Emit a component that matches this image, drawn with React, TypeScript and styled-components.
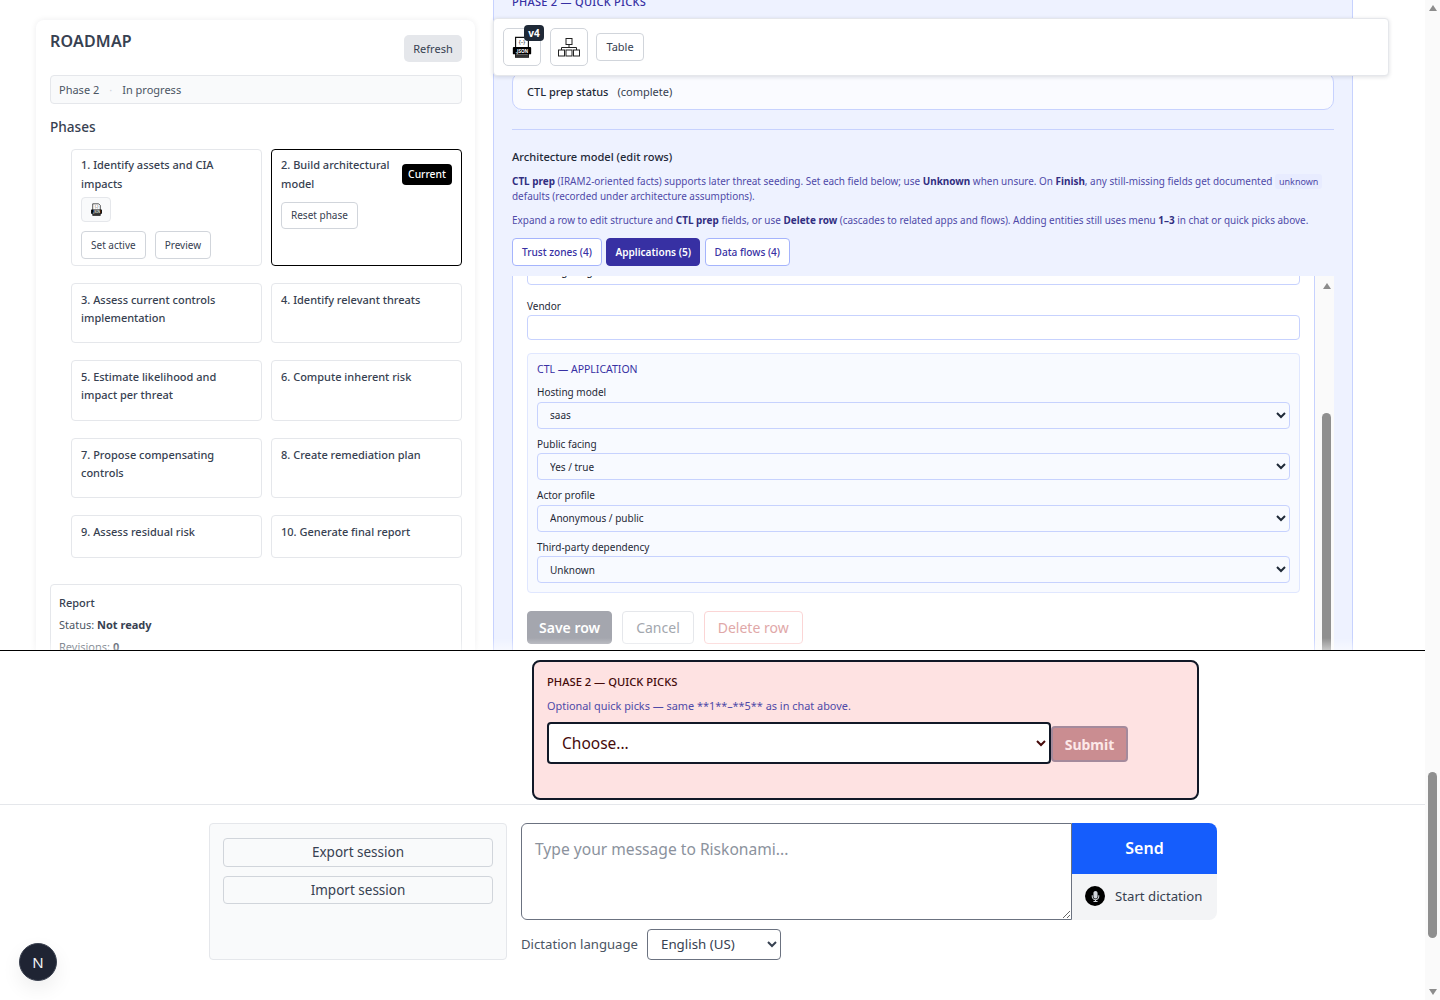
import React from "react";
import styled, { createGlobalStyle } from "styled-components";
import { FaMicrophone } from "react-icons/fa";

const GlobalStyle = createGlobalStyle`
  html, body {
    margin: 0;
    height: 1000px;
    overflow: hidden;
    background: #fff;
  }
  * {
    box-sizing: border-box;
  }
  body, button, select, input, textarea {
    font-family: "Noto Sans", "Open Sans", sans-serif;
  }
`;

const Shell = styled.div`
  display: flex;
  height: 1000px;
  width: 1440px;
`;

const Main = styled.div`
  position: relative;
  width: 1425px;
  display: flex;
  flex-direction: column;
`;

const PageTrack = styled.div`
  width: 15px;
  background: #fafafa;
  padding: 0 3px;
  display: flex;
  flex-direction: column;
  align-items: center;
`;

const ArrowUp = styled.div<{ $top: number }>`
  margin-top: ${(p) => p.$top}px;
  width: 0;
  height: 0;
  border-left: 4.5px solid transparent;
  border-right: 4.5px solid transparent;
  border-bottom: 6px solid #8c8c8c;
`;

const ArrowDown = styled.div<{ $top: number }>`
  margin-top: ${(p) => p.$top}px;
  width: 0;
  height: 0;
  border-left: 4.5px solid transparent;
  border-right: 4.5px solid transparent;
  border-top: 6px solid #8c8c8c;
`;

const Thumb = styled.div<{ $top: number; $height: number }>`
  flex: none;
  margin-top: ${(p) => p.$top}px;
  width: 9px;
  height: ${(p) => p.$height}px;
  border-radius: 5px;
  background: #8f8f8f;
`;

const TopArea = styled.div`
  position: relative;
  height: 651px;
  flex: none;
  display: flex;
  overflow: hidden;
  border-bottom: 1px solid #000;

  &::after {
    content: "";
    position: absolute;
    left: 0;
    right: 0;
    bottom: 0;
    height: 12px;
    background: linear-gradient(rgba(255, 255, 255, 0), rgba(255, 255, 255, 0.5));
  }
`;

const LeftColumn = styled.div`
  width: 493px;
  flex: none;
  padding: 20px 18px 0 36px;
`;

const RoadmapCard = styled.section`
  width: 439px;
  height: 700px;
  background: #fff;
  border-radius: 8px;
  padding: 10px 13px 0 14px;
  box-shadow: 0 0 6px rgba(17, 24, 39, 0.08);
`;

const RoadmapHead = styled.div`
  display: flex;
  justify-content: space-between;
  align-items: flex-start;
`;

const RoadmapTitle = styled.h2`
  margin: 0;
  font-size: 16px;
  line-height: 22px;
  font-weight: 600;
  color: #374151;
  letter-spacing: 0.2px;
`;

const RefreshButton = styled.button`
  margin-top: 5px;
  width: 58px;
  height: 27px;
  padding: 0;
  border: 0;
  border-radius: 5px;
  background: #e5e7eb;
  color: #374151;
  font-size: 11px;
`;

const StatusBar = styled.div`
  margin-top: 13px;
  height: 29px;
  display: flex;
  align-items: center;
  gap: 10px;
  padding: 0 8px;
  background: #f9fafb;
  border: 1px solid #e5e7eb;
  border-radius: 4px;
  font-size: 11px;
  color: #4b5563;
`;

const Dot = styled.span`
  color: #d1d5db;
`;

const PhasesTitle = styled.h3`
  margin: 13px 0 0;
  font-size: 13.6px;
  line-height: 20px;
  font-weight: 500;
  color: #374151;
`;

const PhaseGrid = styled.div`
  margin: 12px 0 0 21px;
  display: grid;
  grid-template-columns: 191px 191px;
  column-gap: 9px;
  row-gap: 16.75px;
`;

const PhaseCard = styled.div<{ $current?: boolean; $tight?: boolean }>`
  position: relative;
  padding: ${(p) => (p.$tight ? "6.3px 9px 6px" : "7px 9px 15.15px")};
  border: 1px solid ${(p) => (p.$current ? "#000" : "#e5e7eb")};
  border-radius: 4px;
  background: #fff;
  font-size: 11px;
  line-height: 18.3px;
  font-weight: 500;
  color: #374151;
`;

const PhaseName = styled.div<{ $narrow?: boolean }>`
  padding-right: ${(p) => (p.$narrow ? "58px" : "0")};
`;

const CurrentBadge = styled.span`
  position: absolute;
  top: 14px;
  right: 9px;
  width: 50px;
  height: 21px;
  border-radius: 4px;
  background: #000;
  color: #fff;
  font-size: 10.3px;
  line-height: 21px;
  text-align: center;
`;

const SmallButton = styled.button`
  display: block;
  height: 28px;
  padding: 0 9px;
  border: 1px solid #d1d5db;
  border-radius: 4px;
  background: #fff;
  color: #374151;
  font-size: 10px;
`;

const ResetButton = styled(SmallButton)`
  height: 27px;
  margin-top: 9px;
`;

const ArtifactButton = styled.button`
  display: flex;
  align-items: center;
  justify-content: center;
  width: 30px;
  height: 25px;
  margin-top: 4px;
  padding: 0;
  border: 1px solid #e5e7eb;
  border-radius: 4px;
  background: #f9fafb;
`;

const ButtonRow = styled.div`
  display: flex;
  gap: 9px;
  margin-top: 9px;
`;

const ReportBox = styled.div`
  margin-top: 26px;
  padding: 10px 8px;
  border: 1px solid #e5e7eb;
  border-radius: 4px;
  font-size: 11px;
  line-height: 16px;
  color: #4b5563;

  strong {
    font-weight: 700;
    color: #374151;
  }
`;

const ReportTitle = styled.div`
  font-weight: 500;
  color: #374151;
`;

const ReportLine = styled.div`
  margin-top: 6px;
`;

const ModelPanel = styled.section`
  width: 860px;
  flex: none;
  display: flex;
  flex-direction: column;
  background: #eef2ff;
  border: solid #c7d2fe;
  border-width: 0 1px;
  padding: 0 18px;
`;

const PanelEyebrow = styled.div`
  margin-top: -6px;
  font-size: 11px;
  line-height: 16px;
  font-weight: 500;
  letter-spacing: 0.28px;
  color: #3730a3;
`;

const PrepStatus = styled.div`
  margin-top: 62px;
  height: 38px;
  display: flex;
  align-items: center;
  gap: 9px;
  padding: 0 14px;
  background: #fafbff;
  border: 1px solid #c7d2fe;
  border-radius: 10px;
  font-size: 11px;
  color: #374151;

  strong {
    font-weight: 500;
    color: #1f2937;
  }
`;

const Rule = styled.hr`
  margin: 19px 0 0;
  border: 0;
  border-top: 1px solid #c7d2fe;
`;

const ModelTitle = styled.div`
  margin-top: 19px;
  font-size: 11.1px;
  line-height: 16px;
  font-weight: 500;
  color: #1f2937;
`;

const HelpText = styled.p<{ $top: number }>`
  margin: ${(p) => p.$top}px 0 0;
  font-size: 9.95px;
  line-height: 15px;
  color: #4f4aa8;

  strong {
    font-weight: 700;
    color: #312e81;
  }
`;

const CodeChip = styled.code`
  padding: 1px 4px;
  border-radius: 3px;
  background: #e8ecff;
  font-family: "Noto Sans", sans-serif;
  font-size: 9px;
`;

const Tabs = styled.div`
  display: flex;
  gap: 4.5px;
  margin-top: 9.5px;
`;

const Tab = styled.button<{ $active?: boolean }>`
  height: 28px;
  padding: 0 ${(p) => (p.$active ? "8px" : "9px")};
  border: 1px solid ${(p) => (p.$active ? "#3730a3" : "#a5b4fc")};
  border-radius: 4px;
  background: ${(p) => (p.$active ? "#3730a3" : "#fff")};
  color: ${(p) => (p.$active ? "#fff" : "#3730a3")};
  font-size: 10.1px;
  font-weight: ${(p) => (p.$active ? 600 : 500)};
`;

const RowScroller = styled.div`
  margin-top: 10.5px;
  flex: 1;
  min-height: 0;
  display: flex;
  overflow: hidden;
`;

const RowContent = styled.div`
  flex: 1;
  background: #fff;
  border: solid #c7d2fe;
  border-width: 0 1px;
  padding: 0 14px;
`;

const RowTrack = styled.div`
  width: 19px;
  flex: none;
  display: flex;
  flex-direction: column;
  align-items: center;
  padding: 0 3px 0 7px;
  background: #fafafa;
`;

const TextField = styled.input`
  display: block;
  width: 100%;
  height: 25px;
  padding: 0 9px;
  border: 1px solid #c7d2fe;
  border-radius: 4px;
  background: #fff;
  font-size: 10px;
  color: #1f2937;
  outline: none;
`;

const ClippedField = styled(TextField)`
  margin-top: -16px;
  padding-bottom: 4px;
`;

const FieldLabel = styled.label`
  display: block;
  font-size: 10px;
  line-height: 15px;
  color: #1f2937;
`;

const VendorLabel = styled(FieldLabel)`
  margin: 14px 0 1px;
`;

const CtlBox = styled.div`
  margin-top: 13px;
  padding: 8px 9px 9px;
  background: #f8faff;
  border: 1px solid #e0e7ff;
  border-radius: 4px;
`;

const CtlHeading = styled.div`
  font-size: 10.5px;
  line-height: 15px;
  color: #3730a3;
`;

const CtlField = styled.div`
  margin-top: 8px;
`;

const CtlSelect = styled.select`
  display: block;
  width: 100%;
  height: 27px;
  margin-top: 1.5px;
  padding: 0 8px;
  border: 1px solid #c7d2fe;
  border-radius: 4px;
  background: #f8faff;
  font-size: 10px;
  color: #1f2937;
`;

const FormActions = styled.div`
  display: flex;
  gap: 9.5px;
  margin-top: 18px;
`;

const FormButton = styled.button<{ $kind: "save" | "cancel" | "delete" }>`
  height: 33px;
  padding: 0 ${(p) => (p.$kind === "save" ? "11px" : p.$kind === "cancel" ? "13.5px" : "13px")};
  border-radius: 4px;
  font-size: 14px;
  font-weight: ${(p) => (p.$kind === "save" ? 600 : 400)};
  background: ${(p) => (p.$kind === "save" ? "#a4a6ae" : "#fff")};
  color: ${(p) => (p.$kind === "save" ? "#fff" : p.$kind === "cancel" ? "#a3a7ae" : "#dfa8a8")};
  border: 1px solid
    ${(p) => (p.$kind === "save" ? "#a4a6ae" : p.$kind === "cancel" ? "#e5e7eb" : "#fbd5d5")};
`;

const FloatingToolbar = styled.div`
  position: absolute;
  top: 18px;
  left: 493px;
  width: 896px;
  height: 58px;
  z-index: 3;
  display: flex;
  align-items: flex-start;
  gap: 8.5px;
  padding: 9px 9px 0;
  background: #fff;
  border: 1px solid #e5e7eb;
  border-radius: 4px;
  box-shadow: 0 1px 4px rgba(17, 24, 39, 0.14);
`;

const ToolIconButton = styled.button`
  position: relative;
  width: 38px;
  height: 38px;
  padding: 0;
  display: flex;
  align-items: center;
  justify-content: center;
  border: 1px solid #d1d5db;
  border-radius: 5px;
  background: #fff;
`;

const ToolTextButton = styled.button`
  width: 48px;
  height: 28px;
  margin-top: 5px;
  padding: 0 0 2px;
  border: 1px solid #d1d5db;
  border-radius: 4px;
  background: #fff;
  color: #374151;
  font-size: 11px;
`;

const VersionBadge = styled.span`
  position: absolute;
  top: -4px;
  right: -4px;
  width: 20px;
  height: 16px;
  border-radius: 4px;
  background: #1f2937;
  color: #fff;
  font-size: 10px;
  font-weight: 700;
  line-height: 16px;
  text-align: center;
`;

const QuickPickZone = styled.div`
  height: 154px;
  flex: none;
  padding: 9px 0 0 532px;
  border-bottom: 1px solid #e5e7eb;
`;

const QuickPickCard = styled.div`
  width: 667px;
  height: 140px;
  padding: 12px 13px;
  background: #fee2e2;
  border: 2px solid #111827;
  border-radius: 8px;
`;

const QuickPickTitle = styled.div`
  font-size: 11.2px;
  line-height: 16px;
  font-weight: 500;
  color: #450a0a;
`;

const QuickPickHint = styled.div`
  margin-top: 8px;
  font-size: 10.9px;
  line-height: 16px;
  color: #4f4aa8;
`;

const QuickPickRow = styled.div`
  display: flex;
  align-items: center;
  margin-top: 8px;
`;

const QuickPickSelect = styled.select`
  width: 504px;
  height: 42px;
  padding: 0 9px;
  border: 2px solid #111827;
  border-radius: 4px;
  background: #fff;
  color: #450a0a;
  font-size: 15.5px;
`;

const SubmitButton = styled.button`
  width: 77px;
  height: 36px;
  margin-top: 2px;
  padding: 0;
  border: 2px solid #a48a9c;
  border-radius: 4px;
  background: #ca8d91;
  color: #fde8e8;
  font-size: 14px;
  font-weight: 700;
`;

const Composer = styled.div`
  display: flex;
  gap: 14px;
  padding: 18px 0 0 209px;
`;

const SessionBox = styled.div`
  width: 298px;
  height: 137px;
  display: flex;
  flex-direction: column;
  gap: 9px;
  padding: 14px 13px;
  background: #f9fafb;
  border: 1px solid #e5e7eb;
  border-radius: 4px;
`;

const SessionButton = styled.button`
  height: 28.5px;
  padding: 0;
  border: 1px solid #d1d5db;
  border-radius: 4px;
  background: transparent;
  color: #374151;
  font-size: 13.5px;
`;

const ComposerMain = styled.div`
  width: 696px;
`;

const MessageRow = styled.div`
  display: flex;
  height: 97px;
`;

const MessageInput = styled.textarea`
  flex: 1;
  padding: 13px 13px;
  border: 1px solid #6b7280;
  border-radius: 6px 0 0 6px;
  font-size: 15.6px;
  line-height: 24px;
  outline: none;
  resize: vertical;

  &::placeholder {
    color: #8b929d;
  }
`;

const SideActions = styled.div`
  width: 145px;
  flex: none;
  display: flex;
  flex-direction: column;
`;

const SendButton = styled.button`
  height: 51px;
  padding: 0 0 2px;
  border: 0;
  border-radius: 0 8px 0 0;
  background: #155dfc;
  color: #fff;
  font-size: 16px;
  font-weight: 600;
`;

const DictationButton = styled.button`
  flex: 1;
  display: flex;
  align-items: center;
  gap: 10px;
  padding: 0 13px 2px;
  border: 0;
  border-radius: 0 0 8px 0;
  background: #f3f4f6;
  color: #374151;
  font-size: 13.2px;
  white-space: nowrap;
`;

const MicCircle = styled.span`
  flex: none;
  width: 20px;
  height: 20px;
  display: flex;
  align-items: center;
  justify-content: center;
  border-radius: 50%;
  background: #000;
  color: #d1d5db;
  font-size: 11px;
`;

const LanguageRow = styled.div`
  display: flex;
  align-items: center;
  gap: 9px;
  margin-top: 9px;
  font-size: 13.15px;
  color: #4b5563;
`;

const LanguageLabel = styled.span`
  padding-bottom: 2px;
`;

const LanguageSelect = styled.select`
  width: 134px;
  height: 31px;
  padding: 0 9px 2px;
  border: 1px solid #6b7280;
  border-radius: 4px;
  background: #fff;
  color: #374151;
  font-size: 13.3px;
`;

const DevBadge = styled.div`
  position: absolute;
  left: 19px;
  top: 943px;
  width: 38px;
  height: 38px;
  display: flex;
  align-items: center;
  justify-content: center;
  border-radius: 50%;
  background: #1f2433;
  border: 1px solid #3b4150;
  color: #f3f4f6;
  font-size: 15px;
  box-shadow: 0 8px 20px rgba(0, 0, 0, 0.07);
`;

const JsonIcon = ({ size }: { size: number }) => (
  <svg width={size} height={size} viewBox="0 0 24 24" aria-hidden="true">
    <path d="M5 1.5h11l3 3V23H5z" fill="#fff" stroke="#111" strokeWidth="1.3" />
    <rect x="2" y="12" width="20" height="8" rx="1" fill="#000" />
    <path d="M5 20h14v3.2H5z" fill="#333" />
    <text x="12" y="9" fontSize="5.5" textAnchor="middle" fill="#222" fontFamily="Noto Sans">
      {"{–}"}
    </text>
    <text x="12" y="18" fontSize="5" fontWeight="700" textAnchor="middle" fill="#fff" fontFamily="Noto Sans">
      .JSON
    </text>
  </svg>
);

const TreeIcon = () => (
  <svg width="22" height="19" viewBox="0 0 22 19" fill="none" stroke="#222" strokeWidth="1" aria-hidden="true">
    <rect x="8" y="0.5" width="6" height="6" />
    <path d="M11 6.5v3M3.5 12V9.5h15V12" />
    <rect x="0.5" y="12" width="6" height="6" />
    <rect x="8" y="12" width="6" height="6" />
    <rect x="15.5" y="12" width="6" height="6" />
  </svg>
);

const phases = [
  "3. Assess current controls implementation",
  "4. Identify relevant threats",
  "5. Estimate likelihood and impact per threat",
  "6. Compute inherent risk",
  "7. Propose compensating controls",
  "8. Create remediation plan",
  "9. Assess residual risk",
  "10. Generate final report",
];

const ctlFields = [
  { label: "Hosting model", value: "saas" },
  { label: "Public facing", value: "Yes / true" },
  { label: "Actor profile", value: "Anonymous / public" },
  { label: "Third-party dependency", value: "Unknown" },
];

const App = () => {
  return (
    <Shell>
      <GlobalStyle />
      <Main>
        <TopArea>
          <LeftColumn>
            <RoadmapCard>
              <RoadmapHead>
                <RoadmapTitle>ROADMAP</RoadmapTitle>
                <RefreshButton>Refresh</RefreshButton>
              </RoadmapHead>
              <StatusBar>
                <span>Phase 2</span>
                <Dot>·</Dot>
                <span>In progress</span>
              </StatusBar>
              <PhasesTitle>Phases</PhasesTitle>
              <PhaseGrid>
                <PhaseCard $tight>
                  <div>1. Identify assets and CIA impacts</div>
                  <ArtifactButton>
                    <JsonIcon size={13} />
                  </ArtifactButton>
                  <ButtonRow>
                    <SmallButton>Set active</SmallButton>
                    <SmallButton>Preview</SmallButton>
                  </ButtonRow>
                </PhaseCard>
                <PhaseCard $current $tight>
                  <PhaseName $narrow>2. Build architectural model</PhaseName>
                  <CurrentBadge>Current</CurrentBadge>
                  <ResetButton>Reset phase</ResetButton>
                </PhaseCard>
                {phases.map((phase) => (
                  <PhaseCard key={phase}>
                    <div>{phase}</div>
                  </PhaseCard>
                ))}
              </PhaseGrid>
              <ReportBox>
                <ReportTitle>Report</ReportTitle>
                <ReportLine>
                  Status: <strong>Not ready</strong>
                </ReportLine>
                <ReportLine>
                  Revisions: <strong>0</strong>
                </ReportLine>
              </ReportBox>
            </RoadmapCard>
          </LeftColumn>

          <ModelPanel>
            <PanelEyebrow>PHASE 2 — QUICK PICKS</PanelEyebrow>
            <PrepStatus>
              <strong>CTL prep status</strong>
              <span>(complete)</span>
            </PrepStatus>
            <Rule />
            <ModelTitle>Architecture model (edit rows)</ModelTitle>
            <HelpText $top={9}>
              <strong>CTL prep</strong> (IRAM2-oriented facts) supports later threat seeding. Set each field
              below; use <strong>Unknown</strong> when unsure. On <strong>Finish</strong>, any still-missing
              fields get documented <CodeChip>unknown</CodeChip> defaults (recorded under architecture
              assumptions).
            </HelpText>
            <HelpText $top={9}>
              Expand a row to edit structure and <strong>CTL prep</strong> fields, or use{" "}
              <strong>Delete row</strong> (cascades to related apps and flows). Adding entities still uses menu{" "}
              <strong>1–3</strong> in chat or quick picks above.
            </HelpText>
            <Tabs>
              <Tab>Trust zones (4)</Tab>
              <Tab $active>Applications (5)</Tab>
              <Tab>Data flows (4)</Tab>
            </Tabs>
            <RowScroller>
              <RowContent>
                <ClippedField defaultValue="Ratings engine" />
                <VendorLabel>Vendor</VendorLabel>
                <TextField />
                <CtlBox>
                  <CtlHeading>CTL — APPLICATION</CtlHeading>
                  {ctlFields.map((field) => (
                    <CtlField key={field.label}>
                      <FieldLabel>{field.label}</FieldLabel>
                      <CtlSelect defaultValue={field.value}>
                        <option>{field.value}</option>
                      </CtlSelect>
                    </CtlField>
                  ))}
                </CtlBox>
                <FormActions>
                  <FormButton $kind="save">Save row</FormButton>
                  <FormButton $kind="cancel">Cancel</FormButton>
                  <FormButton $kind="delete">Delete row</FormButton>
                </FormActions>
              </RowContent>
              <RowTrack>
                <ArrowUp $top={7} />
                <Thumb $top={124} $height={300} />
              </RowTrack>
            </RowScroller>
          </ModelPanel>

          <FloatingToolbar>
            <ToolIconButton>
              <JsonIcon size={22} />
              <VersionBadge>v4</VersionBadge>
            </ToolIconButton>
            <ToolIconButton>
              <TreeIcon />
            </ToolIconButton>
            <ToolTextButton>Table</ToolTextButton>
          </FloatingToolbar>
        </TopArea>

        <QuickPickZone>
          <QuickPickCard>
            <QuickPickTitle>PHASE 2 — QUICK PICKS</QuickPickTitle>
            <QuickPickHint>Optional quick picks — same **1**–**5** as in chat above.</QuickPickHint>
            <QuickPickRow>
              <QuickPickSelect defaultValue="Choose...">
                <option>Choose...</option>
              </QuickPickSelect>
              <SubmitButton>Submit</SubmitButton>
            </QuickPickRow>
          </QuickPickCard>
        </QuickPickZone>

        <Composer>
          <SessionBox>
            <SessionButton>Export session</SessionButton>
            <SessionButton>Import session</SessionButton>
          </SessionBox>
          <ComposerMain>
            <MessageRow>
              <MessageInput placeholder="Type your message to Riskonami..." />
              <SideActions>
                <SendButton>Send</SendButton>
                <DictationButton>
                  <MicCircle>
                    <FaMicrophone />
                  </MicCircle>
                  Start dictation
                </DictationButton>
              </SideActions>
            </MessageRow>
            <LanguageRow>
              <LanguageLabel>Dictation language</LanguageLabel>
              <LanguageSelect defaultValue="English (US)">
                <option>English (US)</option>
              </LanguageSelect>
            </LanguageRow>
          </ComposerMain>
        </Composer>

        <DevBadge>N</DevBadge>
      </Main>
      <PageTrack>
        <ArrowUp $top={5} />
        <Thumb $top={761} $height={166} />
        <ArrowDown $top={51} />
      </PageTrack>
    </Shell>
  );
};

export default App;
